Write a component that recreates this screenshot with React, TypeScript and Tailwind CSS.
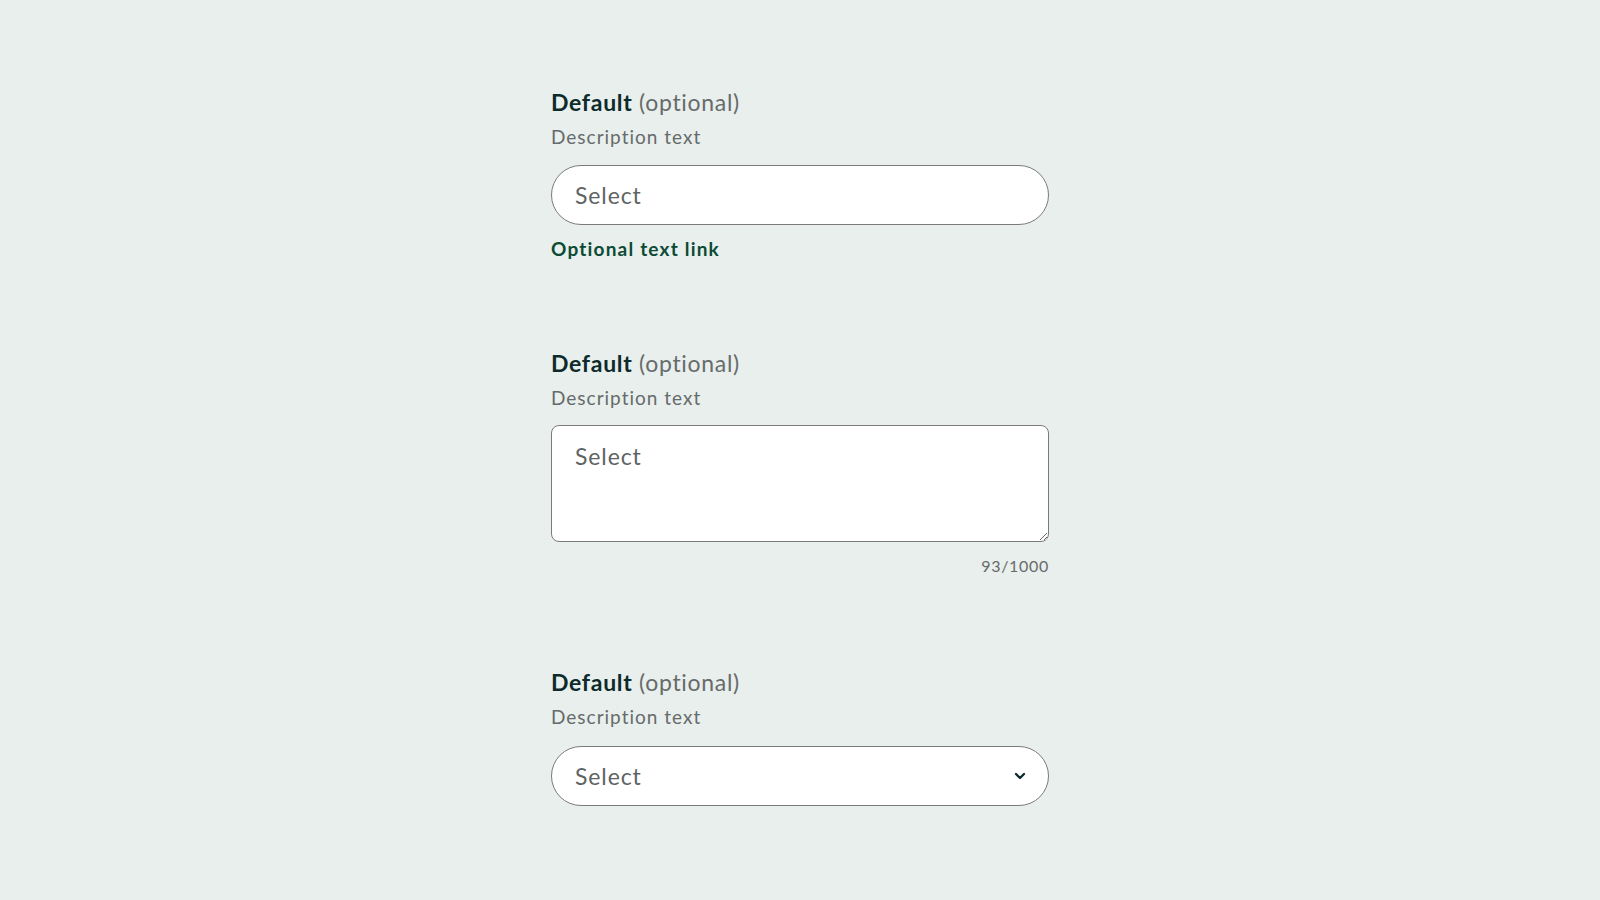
import { ChevronDown } from 'lucide-react';

const font = { fontFamily: '"Lato", "Liberation Sans", sans-serif' };

const Label = () => (
  <div className="h-[28px] leading-[28px] text-[23px] tracking-[0.7px] text-[#0d2b2b]">
    <span className="font-bold">Default</span>{' '}
    <span className="text-[#666b6b]">(optional)</span>
  </div>
);

const Description = () => (
  <div className="mt-[9px] h-[24px] leading-[24px] text-[19px] tracking-[1px] text-[#666b6b]">Description text</div>
);

export default function App() {
  return (
    <div className="min-h-screen w-full bg-[#e9efec]" style={font}>
      <div className="mx-auto w-[498px] pt-[88px] pb-10 flex flex-col">
        <section className="flex flex-col">
          <Label />
          <Description />
          <input
            placeholder="Select"
            className="mt-[16px] h-[60px] w-full rounded-full border border-[#7a7a7a] bg-white px-[23px] text-[23px] tracking-[0.9px] text-[#333] placeholder:text-[#5f6363] outline-none"
          />
          <a href="#" className="mt-[12px] h-[24px] leading-[24px] text-[19px] tracking-[1.2px] font-bold text-[#0b4a35]">
            Optional text link
          </a>
        </section>

        <section className="mt-[88px] flex flex-col">
          <Label />
          <Description />
          <textarea
            placeholder="Select"
            className="mt-[15px] h-[117px] w-full rounded-[8px] border border-[#7a7a7a] bg-white px-[23px] pt-[15px] pb-[12px] text-[23px] tracking-[0.9px] leading-[30px] text-[#333] placeholder:text-[#5f6363] outline-none"
          />
          <div className="mt-[14px] h-[20px] leading-[20px] text-right text-[16px] tracking-[0.7px] text-[#666b6b]">93/1000</div>
        </section>

        <section className="mt-[92px] flex flex-col">
          <Label />
          <Description />
          <button className="mt-[17px] h-[60px] w-full rounded-full border border-[#7a7a7a] bg-white pl-[23px] pr-[20px] flex items-center justify-between">
            <span className="text-[23px] tracking-[0.9px] text-[#5f6363]">Select</span>
            <ChevronDown size={16} strokeWidth={3.5} className="text-[#0d2b2b]" />
          </button>
        </section>
      </div>
    </div>
  );
}
